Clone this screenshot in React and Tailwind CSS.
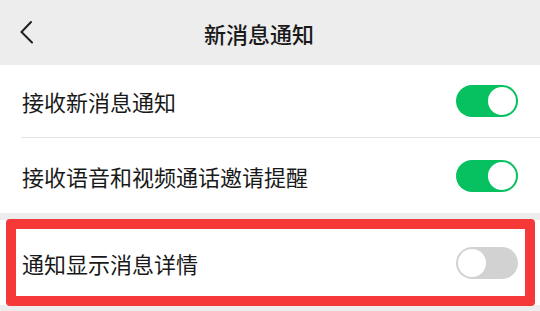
import React from "react";

function Toggle({ on }) {
  return (
    <div
      className={
        "relative w-[62px] h-[32px] rounded-full shrink-0 " +
        (on ? "bg-[#07c160]" : "bg-[#d2d2d2]")
      }
    >
      <div
        className={
          "absolute top-[2px] w-[28px] h-[28px] rounded-full bg-white " +
          (on ? "right-[2px]" : "left-[2px]")
        }
      />
    </div>
  );
}

export default function App() {
  return (
    <div
      className="w-[540px] h-[311px] bg-[#ededed] overflow-hidden text-[#191919]"
      style={{ fontFamily: '"Noto Sans CJK SC", "Noto Sans", sans-serif' }}
    >
      <div className="h-[65px] flex items-center pl-[20px] pr-[20px]">
        <svg width="14" height="24" viewBox="0 0 14 24" className="shrink-0 -mt-[1px]">
          <path d="M11 2 L1.5 12 L12 22.5" fill="none" stroke="#1f1f1f" strokeWidth="2" strokeLinecap="round" strokeLinejoin="miter" />
        </svg>
        <span className="flex-1 text-center mr-[36px] text-[22px] font-medium leading-none">新消息通知</span>
      </div>
      <div className="bg-white">
        <div className="h-[72px] flex items-center justify-between pl-[22px] pr-[22px]">
          <span className="text-[22px] leading-none">接收新消息通知</span>
          <Toggle on />
        </div>
        <div className="ml-[21px] h-px bg-[#e6e6e6]" />
        <div className="h-[75px] flex items-center justify-between pl-[22px] pr-[22px]">
          <span className="text-[22px] leading-none">接收语音和视频通话邀请提醒</span>
          <Toggle on />
        </div>
      </div>
      <div className="h-[7px]" />
      <div className="relative bg-white h-[85px] flex items-center justify-between pl-[22px] pr-[22px]">
        <span className="text-[22px] leading-none">通知显示消息详情</span>
        <Toggle on={false} />
        <div className="absolute left-[6px] right-[5px] -top-[1px] -bottom-[1px] border-[10px] border-[#f53838] rounded-[4px]" />
      </div>
    </div>
  );
}
